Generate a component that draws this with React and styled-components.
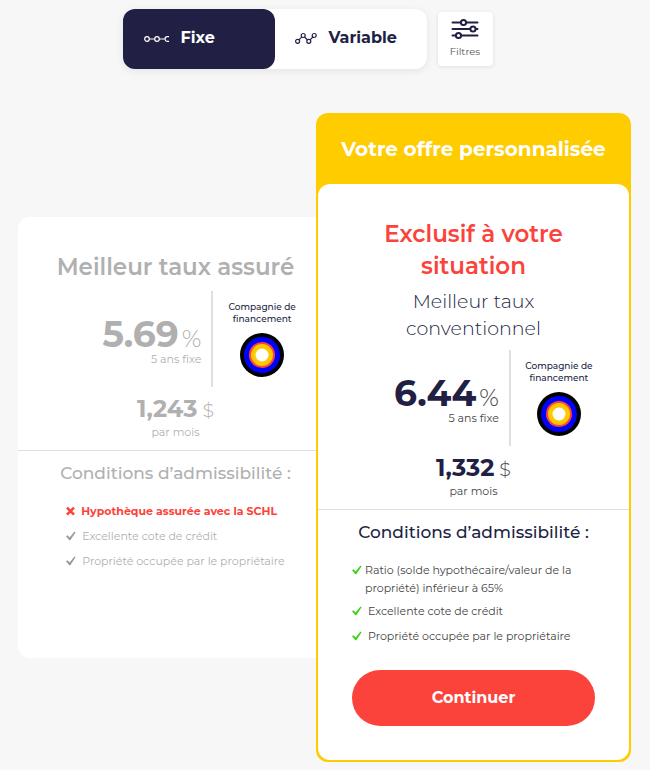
import React from 'react';
import styled, { createGlobalStyle } from 'styled-components';

const colors = {
    border: '#dfdfdf',
    green: '#3fd017',
    muted: '#b0b0b0',
    navy: '#211f44',
    page: '#f7f7f7',
    red: '#fb433b',
    text: '#444',
    yellow: '#ffcc00',
};

const GlobalStyle = createGlobalStyle`
    * {
        box-sizing: border-box;
    }

    body {
        background: ${colors.page};
        color: ${colors.navy};
        font-family: Montserrat, Inter, 'Liberation Sans', sans-serif;
        margin: 0;
    }

    button {
        border: 0;
        cursor: pointer;
        font-family: inherit;
    }

    h2, h3, p, ul {
        margin: 0;
        padding: 0;
    }
`;

// top bar
const Toolbar = styled.div`
    align-items: center;
    display: flex;
    gap: 11px;
    justify-content: center;
    padding: 9px 35px 0 0;
`;

const TabGroup = styled.div`
    background: #fff;
    border-radius: 12px;
    box-shadow: 0 2px 8px rgba(0, 0, 0, 0.08);
    display: flex;
`;

const Tab = styled.button`
    align-items: center;
    background: ${props => (props.$active ? colors.navy : 'transparent')};
    border-radius: 12px;
    color: ${props => (props.$active ? '#fff' : colors.navy)};
    display: flex;
    font-size: 16px;
    font-weight: 700;
    gap: 12px;
    height: 60px;
    padding: 0 20px 4px;
    width: 152px;
`;

const FilterButton = styled.button`
    align-items: center;
    background: #fff;
    border-radius: 4px;
    box-shadow: 0 1px 4px rgba(0, 0, 0, 0.1);
    color: #555;
    display: flex;
    flex-direction: column;
    font-size: 10px;
    gap: 5px;
    height: 54px;
    line-height: 14px;
    padding: 6px 0 0;
    width: 55px;
`;

// offers
const Offers = styled.main`
    align-items: center;
    display: flex;
    padding: 44px 19px 8px 18px;
`;

const Card = styled.section`
    background: #fff;
    border-radius: 12px;
    color: ${colors.muted};
    flex: 1 1 0;
    min-width: 0;
    padding: 34px 0 81px;
`;

const FeaturedCard = styled.section`
    background: ${colors.yellow};
    border-radius: 12px;
    flex: 1 1 0;
    margin-left: -17px;
    min-width: 0;
    padding-bottom: 2px;
    position: relative;
`;

const Banner = styled.h2`
    color: #fff;
    font-size: 20px;
    font-weight: 700;
    line-height: 69px;
    padding-top: 2px;
    text-align: center;
`;

const FeaturedBody = styled.div`
    background: #fff;
    border-radius: 12px;
    margin: 0 2px;
    padding: 34px 0;
`;

const Title = styled.h2`
    color: ${props => (props.$highlight ? colors.red : 'inherit')};
    font-size: 23px;
    font-weight: 600;
    line-height: 32px;
    padding: 0 34px;
    text-align: center;
`;

const Subtitle = styled.p`
    font-size: 19px;
    font-weight: 300;
    line-height: 27px;
    padding: 6px 60px 0;
    text-align: center;
`;

const RateRow = styled.div`
    display: grid;
    grid-template-columns: 62% 1fr;
    height: 96px;
    margin-top: 8px;
`;

const RateCell = styled.div`
    border-right: 2px solid ${colors.border};
    display: flex;
    flex-direction: column;
    justify-content: center;
    padding: 4px 10px 0 0;
    text-align: right;
`;

const Rate = styled.div`
    font-size: 36px;
    font-weight: 700;
    line-height: 36px;
`;

const Unit = styled.span`
    color: ${props => (props.$muted ? colors.muted : colors.text)};
    font-size: ${props => (props.$small ? '19px' : '24px')};
    font-weight: 300;
    line-height: 1;
    margin-left: ${props => (props.$small ? '5px' : '3px')};
`;

const Caption = styled.div`
    color: ${props => (props.$muted ? colors.muted : colors.text)};
    font-size: 11px;
    font-weight: 400;
    line-height: 14px;
`;

const Lender = styled.div`
    align-items: center;
    color: ${colors.navy};
    display: flex;
    flex-direction: column;
    font-size: 9px;
    font-weight: 500;
    gap: 8px;
    line-height: 12px;
    padding: 10px 22px 0 0;
    text-align: center;
`;

const Payment = styled.div`
    border-bottom: 1px solid ${colors.border};
    padding: 7px 0 11px;
    text-align: center;
`;

const Amount = styled.div`
    font-size: 24px;
    font-weight: 700;
    line-height: 30px;
    margin-bottom: 1px;
`;

const Conditions = styled.div`
    align-items: center;
    display: flex;
    flex-direction: column;
    padding: 10px 34px 0;
`;

const ConditionsTitle = styled.h3`
    font-size: 17px;
    font-weight: 500;
    line-height: 24px;
    white-space: nowrap;
`;

const ConditionList = styled.ul`
    color: ${props => (props.$muted ? colors.muted : colors.text)};
    list-style: none;
    margin-top: 17px;
`;

const Condition = styled.li`
    color: ${props => (props.$failed ? colors.red : 'inherit')};
    display: flex;
    font-size: 11px;
    font-weight: ${props => (props.$failed ? 700 : 400)};
    gap: ${props => (props.$wrapped ? '3px' : '6px')};
    line-height: 18px;
    margin-bottom: ${props => (props.$wrapped ? '5px' : '7px')};

    svg {
        flex: none;
        margin-top: 4px;
    }
`;

const ContinueButton = styled.button`
    background: ${colors.red};
    border-radius: 28px;
    color: #fff;
    display: block;
    font-size: 16px;
    font-weight: 700;
    height: 56px;
    margin: 18px 34px 0;
    padding: 0 0 2px;
    width: calc(100% - 68px);
`;

const FixedIcon = () => (
    <svg width="26" height="14" viewBox="-1 0 26 14" fill="none" stroke="currentColor" strokeWidth="1.2">
        <circle cx="3" cy="9" r="2.3" />
        <circle cx="13" cy="9" r="2.3" />
        <path d="M5.3 9h5.4M15.3 9h5.4M25 6.7h-1.7a2.3 2.3 0 1 0 0 4.6h1.7" />
    </svg>
);

const VariableIcon = () => (
    <svg width="22" height="14" viewBox="0 -1 22 14" fill="none" stroke="currentColor" strokeWidth="1.2">
        <circle cx="2.6" cy="10.3" r="2" />
        <circle cx="8.2" cy="4.5" r="2" />
        <circle cx="13.8" cy="10.3" r="2" />
        <circle cx="19.2" cy="4.5" r="2" />
        <path d="M3.9 8.8l3-3M9.5 6l3 3M15.1 8.8l2.8-3" />
    </svg>
);

const FilterIcon = () => (
    <svg width="28" height="22" viewBox="0 0 28 22" fill="#fff" stroke={colors.navy} strokeWidth="2" strokeLinecap="round">
        <path d="M1.5 4.5h25M1.5 11h25M1.5 17.5h25" />
        <circle cx="12.5" cy="4.5" r="2.6" />
        <circle cx="22" cy="11" r="2.6" />
        <circle cx="7.5" cy="17.5" r="2.6" />
    </svg>
);

const CheckIcon = ({ color }) => (
    <svg width="10" height="10" viewBox="0 0 10 10" fill={color}>
        <path d="M0 5.3L1.5 4.2L3.6 6.4L8.5.6L9.6 1.3L4.3 9.2H3.3Z" />
    </svg>
);

const CrossIcon = () => (
    <svg width="9" height="10" viewBox="0 0 9 10" fill="none" stroke={colors.red} strokeWidth="2.6">
        <path d="M1 1.7l7 7M8 1.7l-7 7" />
    </svg>
);

const LenderLogo = () => (
    <svg width="44" height="44" viewBox="0 0 44 44">
        <circle cx="22" cy="22" r="22" fill="#000" />
        <circle cx="22" cy="22" r="18" fill="#0000ff" />
        <circle cx="22" cy="22" r="13" fill="#fb433b" />
        <circle cx="22" cy="22" r="11" fill="#ffc800" />
        <circle cx="22" cy="22" r="6.5" fill="#fff" />
    </svg>
);

const OfferDetails = ({ rate, payment, conditions, muted }) => (
    <>
        <RateRow>
            <RateCell>
                <Rate>
                    {rate}
                    <Unit $muted={muted}>%</Unit>
                </Rate>
                <Caption $muted={muted}>5 ans fixe</Caption>
            </RateCell>
            <Lender>
                <span>Compagnie de<br />financement</span>
                <LenderLogo />
            </Lender>
        </RateRow>
        <Payment>
            <Amount>
                {payment}
                <Unit $muted={muted} $small>$</Unit>
            </Amount>
            <Caption $muted={muted}>par mois</Caption>
        </Payment>
        <Conditions>
            <ConditionsTitle>Conditions d’admissibilité :</ConditionsTitle>
            <ConditionList $muted={muted}>
                {
                    conditions.map(({ text, failed, wrapped }) => (
                        <Condition key={text} $failed={failed} $wrapped={wrapped}>
                            {failed ? <CrossIcon /> : <CheckIcon color={muted ? '#999' : colors.green} />}
                            <span>{text}</span>
                        </Condition>
                    ))
                }
            </ConditionList>
        </Conditions>
    </>
);

const insuredConditions = [
    { text: 'Hypothèque assurée avec la SCHL', failed: true },
    { text: 'Excellente cote de crédit' },
    { text: 'Propriété occupée par le propriétaire' },
];

const conventionalConditions = [
    { text: 'Ratio (solde hypothécaire/valeur de la propriété) inférieur à 65%', wrapped: true },
    { text: 'Excellente cote de crédit' },
    { text: 'Propriété occupée par le propriétaire' },
];

const App = () => (
    <>
        <GlobalStyle />
        <Toolbar>
            <TabGroup>
                <Tab type="button" aria-pressed="true" $active>
                    <FixedIcon />
                    Fixe
                </Tab>
                <Tab type="button" aria-pressed="false">
                    <VariableIcon />
                    Variable
                </Tab>
            </TabGroup>
            <FilterButton type="button">
                <FilterIcon />
                Filtres
            </FilterButton>
        </Toolbar>
        <Offers>
            <Card>
                <Title>Meilleur taux assuré</Title>
                <OfferDetails rate="5.69" payment="1,243" conditions={insuredConditions} muted />
            </Card>
            <FeaturedCard>
                <Banner>Votre offre personnalisée</Banner>
                <FeaturedBody>
                    <Title $highlight>Exclusif à votre situation</Title>
                    <Subtitle>Meilleur taux conventionnel</Subtitle>
                    <OfferDetails rate="6.44" payment="1,332" conditions={conventionalConditions} />
                    <ContinueButton type="button">Continuer</ContinueButton>
                </FeaturedBody>
            </FeaturedCard>
        </Offers>
    </>
);

export default App;
